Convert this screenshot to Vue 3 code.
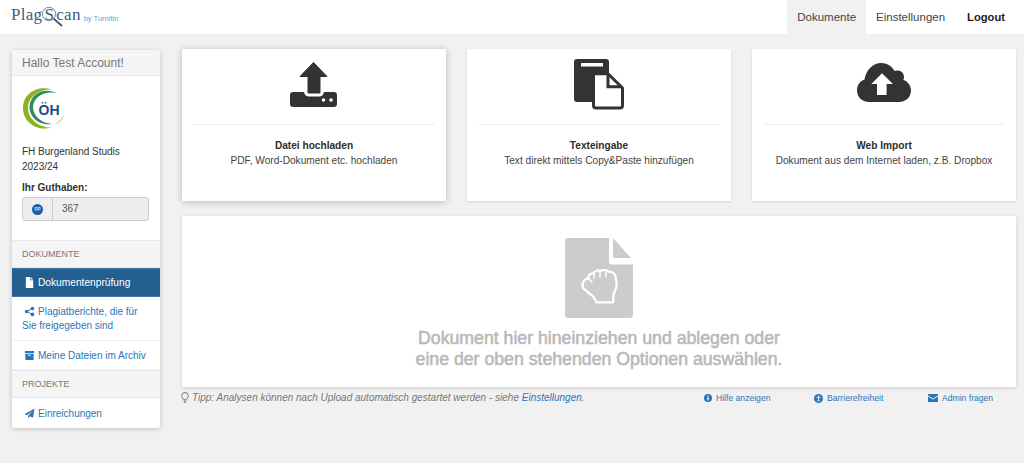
<script setup>
const cards = [
  { title: 'Datei hochladen', text: 'PDF, Word-Dokument etc. hochladen', icon: 'upload' },
  { title: 'Texteingabe', text: 'Text direkt mittels Copy&Paste hinzufügen', icon: 'copy' },
  { title: 'Web Import', text: 'Dokument aus dem Internet laden, z.B. Dropbox', icon: 'cloud' }
]
</script>

<template>
  <div class="page">
    <header class="topbar">
      <div class="logo">
        <span class="logo-word">Plag<span class="logo-s">S<svg class="lens" viewBox="0 0 22 22"><circle cx="8" cy="8" r="6.700" fill="none" stroke="#6b8199" stroke-width=".9"/><path d="M13 13 20.500 19.500" stroke="#3d5672" stroke-width="1.700" stroke-linecap="round"/></svg></span>can</span>
        <span class="logo-by">by Turnitin</span>
      </div>
      <nav class="topnav">
        <a class="nav-item current">Dokumente</a>
        <a class="nav-item settings">Einstellungen</a>
        <a class="nav-item strong">Logout</a>
      </nav>
    </header>

    <div class="layout">
      <aside class="sidebar">
        <div class="side-head hello">Hallo Test Account!</div>
        <div class="account">
          <svg class="oeh" viewBox="0 0 42 44">
            <path d="M30 3.500C16 -1 1 7 1 22c0 14 14 24 29 19.500C18 42 6 34 6 22 6 11 17 3 30 3.500Z" fill="#8fb021"/>
            <path d="M36 8C26 1 9 5 7.500 20 7 30 16 40 30 38 19 37 11 30 11 21 11 11 24 3 36 8Z" fill="#2f8a5a"/>
            <path d="M33 38c6-2 8-6 9-9-2 4-5 7-9 9Z" fill="#8fb021"/>
            <text x="27" y="29" text-anchor="middle" class="oeh-text">ÖH</text>
          </svg>
          <div class="org">FH Burgenland Studis<br>2023/24</div>
          <div class="credit-label">Ihr Guthaben:</div>
          <div class="credit">
            <span class="credit-addon"><svg width="11" height="11" viewBox="0 0 11 11"><circle cx="5.500" cy="5.500" r="5.500" fill="#1c5fae"/><text x="5.500" y="7" text-anchor="middle" class="pp">PP</text></svg></span>
            <span class="credit-value">367</span>
          </div>
        </div>

        <div class="side-head section">DOKUMENTE</div>
        <a class="side-link active">
          <svg class="side-icon" viewBox="0 0 12 12"><path d="M2 0h4.800v3.600h3.200V12H2zM7.600 0 10 2.800H7.600z" fill="#fff"/></svg>Dokumentenprüfung
        </a>
        <a class="side-link two-line">
          <svg class="side-icon" viewBox="0 0 12 12"><circle cx="2.800" cy="6" r="2" fill="#2a76b8"/><circle cx="9.200" cy="2.800" r="2" fill="#2a76b8"/><circle cx="9.200" cy="9.200" r="2" fill="#2a76b8"/><path d="M2.800 6 9.200 2.800M2.800 6l6.400 3.200" stroke="#2a76b8"/></svg>Plagiatberichte, die für Sie freigegeben sind
        </a>
        <a class="side-link archive">
          <svg class="side-icon" viewBox="0 0 12 12"><path d="M1 1h10v2.500H1zM1.500 4.300h9V11h-9z" fill="#2a76b8"/><path d="M4.500 5.800h3" stroke="#fff"/></svg>Meine Dateien im Archiv
        </a>
        <div class="side-head section">PROJEKTE</div>
        <a class="side-link last">
          <svg class="side-icon" viewBox="0 0 12 12"><path d="M11.500 .5 9.800 10.500 6.300 9 4.500 11.500V8.800L9.500 3 3.400 8 .5 6.800z" fill="#2a76b8"/></svg>Einreichungen
        </a>
      </aside>

      <main class="content">
        <section class="cards">
          <article v-for="(card, i) in cards" :key="card.title" class="card" :class="{ raised: i === 0 }">
            <div class="card-icon" :class="'icon-' + card.icon">
              <svg v-if="card.icon === 'upload'" width="48" height="46" viewBox="0 0 48 46">
                <path d="M23.500 1.500 37 15.500H30V32H18V15.500H10Z" fill="#333" stroke="#333" stroke-linejoin="round"/>
                <path d="M3 31h11c.5 3 2.500 4.500 5 4.500h10c2.500 0 4.500-1.500 5-4.500h10c1.700 0 3 1.300 3 3v9c0 1.700-1.300 3-3 3H3c-1.700 0-3-1.300-3-3v-9c0-1.700 1.300-3 3-3Z" fill="#333"/>
                <circle cx="33.500" cy="39" r="1.800" fill="#fff"/><circle cx="41" cy="39" r="1.800" fill="#fff"/>
              </svg>
              <svg v-else-if="card.icon === 'copy'" width="50" height="51" viewBox="0 0 50 51">
                <rect width="35" height="43" rx="3" fill="#333"/>
                <rect x="7" y="4" width="22" height="3.500" fill="#fff"/>
                <path d="M19.500 14.800H34L48.500 29V46.500C48.500 48 47.500 49 46 49H22C20.500 49 19.500 48 19.500 46.500Z" fill="#fff" stroke="#333" stroke-width="3" stroke-linejoin="round"/>
                <path d="M34 15V27.700H48" fill="none" stroke="#333" stroke-width="3"/>
              </svg>
              <svg v-else width="54" height="40" viewBox="0 0 54 40">
                <path d="M12 39C5 39 0 34 0 27.500 0 22 3 18 7.500 16.500 9 7 16 0 24 0 30 0 35 3 37.500 8 39 7.500 40 7.500 41 7.500 44.500 7.500 47 10.500 47 14 47 15 46.800 16 46.300 16.800 51 18.500 54 23 54 27.500 54 34 49 39 42 39Z" fill="#333"/>
                <path d="M25 10.300 36 21H29.600V32H20V21H14.300Z" fill="#fff"/>
              </svg>
            </div>
            <div class="card-text">
              <strong>{{ card.title }}</strong>
              <span>{{ card.text }}</span>
            </div>
          </article>
        </section>

        <section class="dropzone">
          <svg width="68" height="80" viewBox="0 0 68 80">
            <path d="M3 0h41v24c0 1.500 1 2.500 2.500 2.500H68V77c0 1.700-1.300 3-3 3H3c-1.700 0-3-1.300-3-3V3C0 1.300 1.300 0 3 0Z" fill="#ccc"/>
            <path d="M48 0 66 20H48Z" fill="#ccc"/>
            <path d="M17.700 45.300C18.500 42 21 40.500 23.300 40.300 23 37.500 25.500 35 28.300 35.500 30 32.500 33 32 35 33 37.500 31.500 41.500 32 43.300 33.500 47 33.500 50 35.500 50.500 38.500L51.700 47C51.700 51 49 54 48.300 57V64.300H31.700L28.300 58.700 18.300 50.300C17.500 48.500 17.300 47 17.700 45.300Z" fill="none" stroke="#fff" stroke-width="2.300" stroke-linejoin="round"/>
            <path d="M29 36v4M35 34v5M41 34v5M23.300 40.500 27 44" stroke="#fff" stroke-width="1.500" stroke-linecap="round"/>
          </svg>
          <p>Dokument hier hineinziehen und ablegen oder<br>eine der oben stehenden Optionen auswählen.</p>
        </section>

        <footer class="foot">
          <div class="tip">
            <svg class="bulb" width="8" height="11" viewBox="0 0 8 11"><path d="M4 .5a3.300 3.300 0 0 0-3.300 3.300c0 1.700 1.500 2.500 1.700 4h3.200c.2-1.500 1.700-2.300 1.700-4A3.300 3.300 0 0 0 4 .5Z" fill="none" stroke="#777"/><path d="M2.800 9.200h2.400M3.300 10.500h1.400" stroke="#777"/></svg>
            <em>Tipp: Analysen können nach Upload automatisch gestartet werden - siehe <a class="blue">Einstellungen</a>.</em>
          </div>
          <div class="foot-links">
            <a class="foot-link help">
              <svg width="8" height="8" viewBox="0 0 8 8"><circle cx="4" cy="4" r="4" fill="#2a76b8"/><path d="M4 3.300v3M4 1.500v1" stroke="#fff" stroke-width="1.300"/></svg>Hilfe anzeigen
            </a>
            <a class="foot-link access">
              <svg width="9" height="9" viewBox="0 0 9 9"><circle cx="4.500" cy="4.500" r="4.500" fill="#2a76b8"/><circle cx="4.500" cy="2.300" r=".8" fill="#fff"/><path d="M2.500 3.600h4M4.500 3.600v2.400M4.500 6 3.500 7.600M4.500 6l1 1.600" stroke="#fff" stroke-width=".8"/></svg>Barrierefreiheit
            </a>
            <a class="foot-link">
              <svg width="10" height="8" viewBox="0 0 10 8"><path d="M0 0h10v1.500L5 4.500 0 1.500zM0 2.600l5 3 5-3V8H0z" fill="#2a76b8"/></svg>Admin fragen
            </a>
          </div>
        </footer>
      </main>
    </div>
  </div>
</template>

<style>
html, body { margin: 0; background: #f1f1f1; }
</style>

<style scoped>
.page { width: 1024px; height: 463px; overflow: hidden; background: #f1f1f1; font-family: "Liberation Sans", Arial, sans-serif; color: #333; font-size: 10.500px; }
a { text-decoration: none; }
.topbar { height: 34px; background: #fff; display: flex; justify-content: space-between; }
.logo { padding: 5px 0 0 11px; display: flex; align-items: flex-start; color: #3f5b7b; }
.logo-word { font-family: "Liberation Serif", serif; font-size: 17px; letter-spacing: .3px; line-height: 20px; white-space: nowrap; }
.logo-s { position: relative; display: inline-block; margin: 0 2px 0 2px; }
.lens { position: absolute; left: -3px; top: 1px; width: 22px; height: 22px; }
.logo-by { color: #58a4ec; font-size: 7.500px; margin: 9px 0 0 3px; white-space: nowrap; }
.topnav { display: flex; padding-right: 8px; }
.nav-item { display: flex; align-items: center; padding: 0 10px; font-size: 11.500px; color: #444; height: 34px; }
.nav-item.current { background: #f1f1f1; }
.nav-item.settings { padding-right: 11px; }
.nav-item.strong { font-weight: 700; color: #222; font-size: 11.200px; padding-left: 11px; padding-right: 11px; }
.layout { display: flex; align-items: flex-start; padding: 15px 8px 0 12px; gap: 22px; }
.sidebar { width: 148px; flex: none; background: #fff; box-shadow: 0 1px 5px rgba(0,0,0,.2); border-radius: 2px; margin-top: 1px; }
.side-head { background: #f5f5f5; color: #777; box-sizing: border-box; display: flex; align-items: center; padding-left: 10px; border-bottom: 1px solid #e8e8e8; }
.hello { height: 26px; font-size: 12px; }
.section { height: 28px; font-size: 9px; border-top: 1px solid #e8e8e8; }
.account { height: 164px; box-sizing: border-box; padding: 10px 10px 0; font-size: 10px; }
.oeh { display: block; width: 42px; height: 44px; }
.oeh-text { font: 700 14px "Liberation Sans", Arial, sans-serif; fill: #17507f; }
.pp { font: 700 4.500px "Liberation Sans", Arial, sans-serif; fill: #d8e6f5; }
.org { margin-top: 15px; line-height: 14.500px; color: #333; }
.credit-label { font-weight: 700; margin-top: 7px; line-height: 14px; }
.credit { display: flex; height: 24px; margin-top: 2px; background: #eee; border: 1px solid #ccc; border-radius: 3px; box-sizing: border-box; width: 127px; }
.credit-addon { width: 29px; display: flex; align-items: center; justify-content: center; border-right: 1px solid #ccc; }
.credit-value { padding-left: 9px; line-height: 22px; color: #555; }
.side-link { display: block; box-sizing: border-box; padding: 7px 10px 0; color: #2a76b8; font-size: 10px; line-height: 14px; height: 29px; border-bottom: 1px solid #eee; }
.side-icon { width: 11px; height: 11px; display: inline-block; vertical-align: -2px; margin: 0 3px 0 2px; }
.active { background: #245f92; color: #fff; border: 1px solid #3d76a6; border-width: 1px 0; font-size: 10.200px; }
.two-line { height: 44px; padding-top: 8px; }
.archive { padding-top: 8px; }
.last { height: 30px; border-bottom: 0; padding-top: 9px; }
.content { width: 834px; flex: none; }
.cards { display: flex; justify-content: space-between; }
.card { width: 264px; height: 152px; background: #fff; box-shadow: 0 1px 3px rgba(0,0,0,.12); box-sizing: border-box; padding: 0 11px; border-radius: 1px; }
.card.raised { box-shadow: 0 1px 7px rgba(0,0,0,.25); }
.card-icon { height: 76px; box-sizing: border-box; padding-top: 10px; border-bottom: 1px solid #eee; display: flex; justify-content: center; align-items: flex-start; }
.icon-upload { padding-top: 12px; }
.icon-cloud { padding-top: 14px; }
.card-text { display: flex; flex-direction: column; align-items: center; margin-top: 14px; line-height: 14.500px; font-size: 10.150px; color: #444; white-space: nowrap; }
.card-text strong { color: #2e2e2e; }
.dropzone { margin-top: 15px; height: 171px; background: #fff; box-shadow: 0 1px 4px rgba(0,0,0,.15); display: flex; flex-direction: column; align-items: center; box-sizing: border-box; padding-top: 22px; }
.dropzone p { margin: 10px 0 0; text-align: center; font-size: 17.700px; font-weight: 400; line-height: 21px; color: #b8b8b8; -webkit-text-stroke: .55px #b8b8b8; }
.foot { display: flex; justify-content: space-between; margin-top: 5px; font-size: 10px; line-height: 12px; }
.tip { color: #777; white-space: nowrap; margin-left: -1px; }
.bulb { vertical-align: -2px; margin-right: 3px; }
.blue { color: #2a76b8; }
.foot-links { display: flex; width: 312px; color: #2a76b8; font-size: 8.600px; }
.foot-link { color: #2a76b8; white-space: nowrap; display: flex; align-items: center; gap: 4px; }
.help { width: 110px; }
.access { width: 114px; }
</style>
